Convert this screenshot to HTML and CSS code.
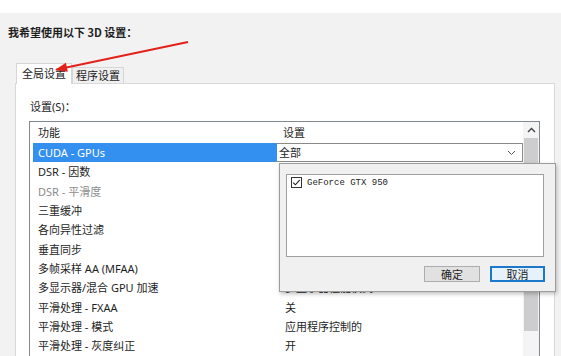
FILE: index.html
```html
<!DOCTYPE html>
<html lang="zh-CN">
<head>
  <meta charset="UTF-8" />
  <title>3D 设置</title>
  <link rel="stylesheet" href="styles.css">
</head>
<body>
  <div class="top-strip"></div>
  <div class="page">
    <h1 class="title">我希望使用以下 3D 设置：</h1>

    <div class="tabs">
      <div class="tab active">全局设置</div>
      <div class="tab">程序设置</div>
    </div>

    <div class="panel">
      <div class="label">设置(S)：</div>
      <div class="list">
        <div class="list-body">
          <div class="row head"><span>功能</span><span>设置</span></div>
          <div class="row selected">
            <span>CUDA - GPUs</span>
            <span class="combo">全部
              <svg class="chev" width="9" height="6" viewBox="0 0 9 6"><path d="M1 1l3.5 3.5L8 1" fill="none" stroke="#555" stroke-width="1"/></svg>
            </span>
          </div>
          <div class="row"><span>DSR - 因数</span><span>关</span></div>
          <div class="row disabled"><span>DSR - 平滑度</span><span>33%</span></div>
          <div class="row"><span>三重缓冲</span><span>关</span></div>
          <div class="row"><span>各向异性过滤</span><span>应用程序控制的</span></div>
          <div class="row"><span>垂直同步</span><span>使用 3D 应用程序设置</span></div>
          <div class="row"><span>多帧采样 AA (MFAA)</span><span>关</span></div>
          <div class="row"><span>多显示器/混合 GPU 加速</span><span>多显示器性能模式</span></div>
          <div class="row"><span>平滑处理 - FXAA</span><span>关</span></div>
          <div class="row"><span>平滑处理 - 模式</span><span>应用程序控制的</span></div>
          <div class="row"><span>平滑处理 - 灰度纠正</span><span>开</span></div>
        </div>
        <div class="scrollbar">
          <div class="arrow-up">
            <svg width="9" height="6" viewBox="0 0 9 6"><path d="M1 5l3.5-3.5L8 5" fill="none" stroke="#444" stroke-width="1.4"/></svg>
          </div>
          <div class="thumb"></div>
        </div>
      </div>
    </div>
  </div>

  <!-- GPU dropdown -->
  <div class="popup">
    <div class="gpu-list">
      <label class="gpu-item">
        <svg width="11" height="11" viewBox="0 0 11 11"><rect x="0.5" y="0.5" width="10" height="10" fill="#fff" stroke="#333"/><path d="M2.2 5.6l2.2 2.2 4.4-5" fill="none" stroke="#222" stroke-width="1.1"/></svg>
        <span>GeForce GTX 950</span>
      </label>
    </div>
    <div class="buttons">
      <button class="btn">确定</button>
      <button class="btn primary">取消</button>
    </div>
  </div>

  <svg class="arrow" width="561" height="356" viewBox="0 0 561 356">
    <line x1="188" y1="42" x2="64" y2="68" stroke="#e3211b" stroke-width="2"/>
    <polygon points="55,70 67.8,71.8 65.9,62.8" fill="#e3211b"/>
  </svg>
</body>
</html>
```

FILE: styles.css
```css
* { box-sizing: border-box; }
body {
  margin: 0;
  width: 561px;
  height: 356px;
  overflow: hidden;
  font-family: "Noto Sans", "Noto Sans CJK SC", sans-serif;
  font-size: 11px;
  color: #1e1e1e;
  background: #f2f2f2;
}
.top-strip { height: 13px; background: #fff; }
.page { padding: 11px 0 0 8px; }
.title {
  margin: 0;
  font-size: 11px;
  font-weight: bold;
  line-height: 16px;
  font-family: "Noto Sans CJK SC", sans-serif;
}

/* tabs */
.tabs {
  display: flex;
  align-items: flex-end;
  margin-top: 23px;
  padding-left: 8px;
}
.tab {
  height: 16px;
  line-height: 15px;
  padding: 0 3px;
  border: 1px solid #d6d6d6;
  border-bottom: none;
  background: #f0f0f0;
}
.tab.active {
  height: 21px;
  line-height: 19px;
  padding: 0 5px;
  background: #fff;
  margin-bottom: -1px;
  position: relative;
  z-index: 1;
}

.panel {
  margin-left: 7px;
  width: 540px;
  height: 273px;
  border: 1px solid #d9d9d9;
  border-bottom: none;
  background: #fff;
  padding: 15px 0 0 14px;
}
.label { line-height: 16px; }

/* list */
.list {
  display: flex;
  margin: 6px 0 0 -1px;
  width: 511px;
  height: 235px;
  border: 1px solid #828790;
  border-bottom: none;
  overflow: hidden;
}
.list-body { flex: 1; padding-left: 3px; }
.row {
  display: grid;
  grid-template-columns: 242px 1fr;
  height: 19.3px;
  align-items: center;
}
.row span { padding-left: 5px; line-height: 19px; white-space: nowrap; }
.row span + span { padding-left: 10px; }
.row.head { height: 21px; }
.row.head span + span { padding-left: 8px; }
.row.disabled span:first-child { color: #8c8c8c; }
.row.selected span:first-child { background: #3390f0; color: #fff; }
.row.selected .combo {
  display: flex;
  align-items: center;
  justify-content: space-between;
  height: 19px;
  padding: 0 6px 0 2px;
  border: 1px solid #8a8a8a;
  border-left: 2px solid #3390f0;
  line-height: 17px;
}

.scrollbar {
  width: 16px;
  background: #f4f4f4;
  display: flex;
  flex-direction: column;
  align-items: center;
}
.arrow-up {
  height: 16px;
  display: flex;
  align-items: center;
  justify-content: center;
}
.thumb { width: 14px; height: 193px; background: #cdcdcd; }

/* GPU dropdown */
.popup {
  position: absolute;
  left: 279px;
  top: 163px;
  width: 277px;
  height: 129px;
  padding: 10px 11px 0 6px;
  background: #f0f0f0;
  border: 1px solid #9c9c9c;
  box-shadow: 1px 2px 4px rgba(0,0,0,0.25);
  z-index: 5;
}
.gpu-list {
  height: 83px;
  background: #fff;
  border: 1px solid #a0a0a0;
  padding: 2px 4px;
}
.gpu-item { display: flex; align-items: center; gap: 5px; }
.gpu-item span {
  font-family: "Liberation Mono", monospace;
  font-size: 9px;
  color: #222;
}
.buttons {
  display: flex;
  justify-content: flex-end;
  gap: 10px;
  margin-top: 9px;
  margin-right: -1px;
}
.btn {
  width: 56px;
  height: 16px;
  padding: 0;
  font-family: "Noto Sans CJK SC", sans-serif;
  font-size: 11px;
  line-height: 14px;
  color: #1e1e1e;
  background: #e1e1e1;
  border: 1px solid #adadad;
}
.btn.primary {
  width: 55px;
  background: #e5f1fb;
  border: 2px solid #1c78c8;
  line-height: 12px;
}

.arrow {
  position: absolute;
  left: 0;
  top: 0;
  pointer-events: none;
  z-index: 10;
}
```
